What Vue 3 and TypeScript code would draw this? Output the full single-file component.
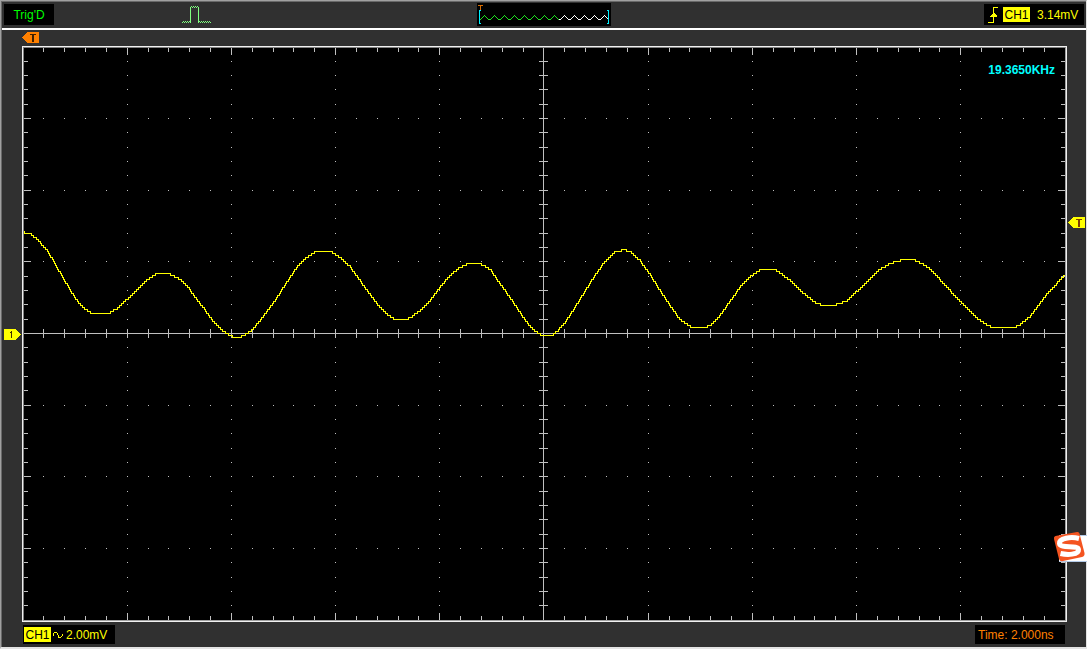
<script setup lang="ts">
type Point = [number, number]

const columns = Array.from({ length: 49 }, (_, i) => ({
  x: Math.ceil(22 + 20.839 * (i + 1)),
  major: (i + 1) % 5 === 0,
}))
const rows = Array.from({ length: 39 }, (_, i) => ({
  y: Math.floor(46.7 + 14.3334 * (i + 1)),
  major: (i + 1) % 5 === 0,
}))

// Grid coordinates start at the inner corner of the frame.
const LEFT = 24
const TOP = 48
const WIDTH = 1041
const HEIGHT = 572

function buildTicks(): string {
  const parts: string[] = []
  for (const { x: gx, major } of columns) {
    const x = gx - LEFT
    const size = major ? 7 : 4
    parts.push(`M${x} 0h1v${size}h-1z`, `M${x} ${HEIGHT - size}h1v${size}h-1z`, `M${x} 281h1v9h-1z`)
  }
  for (const { y: gy, major } of rows) {
    const y = gy - TOP
    const size = major ? 7 : 4
    parts.push(`M0 ${y}h${size}v1h-${size}z`, `M${WIDTH - size} ${y}h${size}v1h-${size}z`, `M515 ${y}h9v1h-9z`)
  }
  parts.push(`M0 285h${WIDTH}v1h-${WIDTH}z`, `M519 0h1v${HEIGHT}h-1z`)
  return parts.join('')
}

function buildDots(): string {
  const parts: string[] = []
  for (const column of columns) {
    for (const row of rows) {
      if (column.major || row.major) parts.push(`M${column.x - LEFT} ${row.y - TOP}h1v1h-1z`)
    }
  }
  return parts.join('')
}

const samples: Point[] = [
  [24, 232], [31, 234], [35, 237], [41, 243], [47, 250], [54, 261], [60, 272], [64, 279], [70, 289],
  [75, 297], [80, 304], [86, 309], [90, 312], [98, 314], [104, 313], [110, 312], [117, 308], [127, 299],
  [137, 289], [148, 279], [155, 274], [163, 272], [168, 273], [173, 275], [180, 279], [189, 288],
  [196, 298], [204, 308], [211, 318], [220, 328], [228, 334], [234, 337], [240, 337], [247, 333],
  [253, 329], [260, 320], [270, 307], [276, 299], [282, 289], [288, 280], [294, 271], [301, 262],
  [307, 257], [313, 253], [316, 251], [331, 251], [335, 254], [341, 258], [350, 266], [360, 280],
  [370, 294], [380, 307], [387, 314], [395, 319], [407, 319], [412, 316], [420, 310], [430, 300],
  [440, 287], [450, 275], [460, 267], [468, 263], [479, 263], [484, 265], [491, 270], [500, 283],
  [510, 297], [520, 312], [530, 326], [537, 332], [542, 335], [552, 335], [558, 330], [565, 322],
  [575, 307], [585, 291], [595, 275], [605, 261], [614, 252], [621, 250], [624, 249], [631, 252],
  [640, 260], [650, 274], [660, 290], [670, 305], [680, 319], [690, 326], [697, 328], [703, 328],
  [711, 324], [720, 315], [730, 301], [740, 287], [750, 276], [758, 271], [760, 269], [775, 269],
  [781, 273], [790, 280], [800, 290], [810, 298], [817, 303], [824, 305], [832, 305], [840, 303],
  [847, 300], [857, 291], [870, 278], [880, 269], [890, 263], [900, 260], [904, 258], [910, 258],
  [915, 260], [925, 265], [933, 271], [940, 279], [950, 290], [960, 301], [970, 311], [980, 320],
  [990, 326], [994, 328], [1013, 328], [1020, 324], [1030, 316], [1040, 303], [1050, 290],
  [1057, 283], [1062, 277], [1065, 275],
]

function buildTrace(): string {
  let segment = 0
  let level = 231 - TOP
  let path = `M0 ${level + 0.5}`
  for (let x = 25; x <= 1064; x += 1) {
    while (samples[segment + 1][0] < x) segment += 1
    const [x0, y0] = samples[segment]
    const [x1, y1] = samples[segment + 1]
    const value = y0 + ((y1 - y0) * (x - x0)) / (x1 - x0) - TOP
    if (Math.abs(value - level) > 1) {
      level += value > level ? 2 : -2
      path += `H${x - LEFT - 0.5}V${level + 0.5}`
    }
  }
  return `${path}H${WIDTH}`
}

const ticks = buildTicks()
const dots = buildDots()
const trace = buildTrace()

function zigzag(start: number, end: number): string {
  let path = ''
  for (let x = start; x <= end; x += 1) {
    const phase = (x + 8) % 10
    const y = 12 + Math.min(4, Math.abs(phase - 5))
    path += `M${x} ${y}h1v1h-1z`
  }
  return path
}
const stored = zigzag(3, 81)
const remaining = zigzag(82, 130)

const pulse = Array.from({ length: 29 }, (_, x) => {
  const high = x >= 8 && x <= 16
  return `M${x} ${(high ? 0 : 15) + (x % 2 === 0 ? 1 : 0)}h1v1h-1z`
}).join('') + 'M8 1h1v16h-1zM16 1h1v16h-1z'
</script>

<template>
  <main class="scope">
    <header class="topbar">
      <output class="status">Trig'D</output>
      <svg class="pulse" width="29" height="17" viewBox="0 0 29 17" aria-hidden="true">
        <path :d="pulse" fill="#80ff80" />
      </svg>
      <svg class="memory" width="134" height="23" viewBox="0 0 134 23" aria-hidden="true">
        <path :d="stored" fill="#20e020" />
        <path :d="remaining" fill="#fff" />
        <path d="M2 7h2v1h-1v12h1v1h-2zM130 7h2v14h-2v-1h1v-12h-1z" fill="#00f0ff" />
        <path d="M1 2H6V3H4V7H3V3H1z" fill="#d86c00" />
      </svg>
      <div class="trigger">
        <svg width="12" height="18" viewBox="0 0 12 18" aria-hidden="true">
          <path d="M1 16h5v-15h5v1h-4v15h-6z" fill="#ff0" />
          <path d="M6 7H7L10 10V11H3V10z" fill="#ff0" />
        </svg>
        <span class="channel">CH1</span>
        <span class="level">3.14mV</span>
      </div>
    </header>

    <section class="workspace">
      <div class="marker-row">
        <svg width="17" height="11" viewBox="0 0 17 11" aria-hidden="true">
          <path d="M0 5.500L5 0H17V11H5z" fill="#ff8000" />
          <path d="M8 2H14V3H12V10H10V3H8z" fill="#402000" />
        </svg>
      </div>
      <div class="middle">
        <div class="left-rail">
          <svg width="17" height="11" viewBox="0 0 17 11" aria-hidden="true">
            <path d="M0 0H12L17 5.500L12 11H0z" fill="#ff0" />
            <path d="M5 4h1v-1h1v-1h1v7h-1v-5h-2z" fill="#403000" />
          </svg>
        </div>
        <div class="frame">
          <svg class="graph" viewBox="0 0 1041 572" preserveAspectRatio="none" role="img" aria-label="CH1 waveform">
            <path :d="dots" fill="#c0c0c0" />
            <path :d="ticks" fill="#c0c0c0" />
            <path :d="trace" fill="none" stroke="#ff0" />
          </svg>
          <output class="frequency">19.3650KHz</output>
        </div>
        <div class="right-rail">
          <svg width="17" height="11" viewBox="0 0 17 11" aria-hidden="true">
            <path d="M0 5.500L5 0H17V11H5z" fill="#ff0" />
            <path d="M8 2H14V3H12V10H10V3H8z" fill="#804000" />
          </svg>
        </div>
      </div>
    </section>

    <footer class="bottombar">
      <div class="readout">
        <span class="channel">CH1</span>
        <svg class="coupling" width="10" height="8" viewBox="0 0 10 8" aria-hidden="true">
          <path d="M.5 4.500V3L2 1H3.500L6 6.500H7.500L9.500 4.500V3" fill="none" stroke="#ff0" />
        </svg>
        <span>2.00mV</span>
      </div>
      <output class="timebase">Time: 2.000ns</output>
    </footer>

    <div class="badge">
      <svg width="34" height="32" viewBox="0 0 34 32" aria-hidden="true">
        <path d="M6 5H34V30H6z" fill="#fff" />
        <path d="M6 4.500H34M6 30.500H34" stroke="#b4cbe8" />
        <path d="M2.500 5L24 1Q26 .5 26.500 2.500L31.500 22Q32 25 29 26L10 30Q7 31 6 28L1 8Q.5 5.500 2.500 5z" fill="#f45420" />
        <path d="M26 7.500C18 5.500 6 7 6.500 12.500C7 18 25 13.500 25.500 18.500C26 24 14 24 7.500 22.500" fill="none" stroke="#fff" stroke-width="5" />
      </svg>
    </div>
  </main>
</template>

<style>
body {
  margin: 0;
  background: #fff;
}
</style>

<style scoped>
.scope {
  position: relative;
  display: flex;
  flex-direction: column;
  box-sizing: border-box;
  min-height: 100vh;
  margin-right: 1px;
  border: 1px solid #a0a0a0;
  border-right-color: #e3e3e3;
  border-bottom: 2px solid #e3e3e3;
  box-shadow: inset 1px 1px #696969;
  background: #303030;
  font: 12px/16px "Liberation Sans", Arial, sans-serif;
}
svg {
  display: block;
  flex: none;
  shape-rendering: crispEdges;
}
.topbar {
  display: grid;
  grid-template-columns: 178px 1fr 134px 1fr 178px;
  height: 27px;
  margin-left: 1px;
  border-bottom: 2px solid #fff;
}
.status {
  width: 50px;
  height: 21px;
  margin: 3px 0 0 2px;
  background: #000;
  color: #0f0;
  line-height: 22px;
  text-align: center;
}
.pulse {
  margin: 5px 0 0 2px;
}
.memory {
  margin-top: 2px;
  background: #000;
}
.trigger {
  grid-column: 5;
  justify-self: end;
  display: flex;
  align-items: center;
  box-sizing: border-box;
  width: 100px;
  height: 21px;
  margin: 3px 2px 0 0;
  padding-left: 3px;
  background: #000;
  color: #ff0;
}
.channel {
  flex: none;
  width: 27px;
  height: 15px;
  background: #ff0;
  color: #000;
  line-height: 16px;
  text-align: center;
}
.trigger .channel {
  margin-left: 4px;
}
.level {
  margin-left: 7px;
}
.workspace {
  display: flex;
  flex: 1;
  flex-direction: column;
}
.marker-row {
  height: 16px;
  padding: 2px 0 0 21px;
  box-sizing: border-box;
}
.middle {
  display: flex;
  flex: 1;
}
.left-rail {
  width: 18px;
  padding: 283px 0 0 3px;
}
.right-rail {
  width: 17px;
  padding: 171px 1px 0 1px;
}
.frame {
  position: relative;
  display: flex;
  flex: 1;
  box-sizing: border-box;
  border: 1px solid #f0f0f0;
  background: #000;
}
.graph {
  flex: 1;
  width: 100%;
  height: 572px;
  border: 1px solid #a0a0a0;
  border-top-color: #808080;
  border-left-color: #808080;
}
.frequency {
  position: absolute;
  top: 15px;
  right: 11px;
  color: #0ff;
  font-weight: bold;
}
.bottombar {
  display: flex;
  justify-content: space-between;
  height: 25px;
  padding: 0 21px 0 22px;
}
.readout {
  display: flex;
  align-items: center;
  box-sizing: border-box;
  width: 92px;
  height: 19px;
  margin-top: 3px;
  padding-left: 1px;
  background: #000;
  color: #ff0;
}
.coupling {
  margin: 0 3px 0 2px;
}
.timebase {
  box-sizing: border-box;
  width: 90px;
  height: 19px;
  margin-top: 3px;
  padding-left: 3px;
  background: #000;
  color: #ff8000;
  line-height: 20px;
  white-space: nowrap;
}
.badge {
  position: absolute;
  right: -1px;
  bottom: 84px;
}
.badge svg {
  shape-rendering: auto;
}
</style>
